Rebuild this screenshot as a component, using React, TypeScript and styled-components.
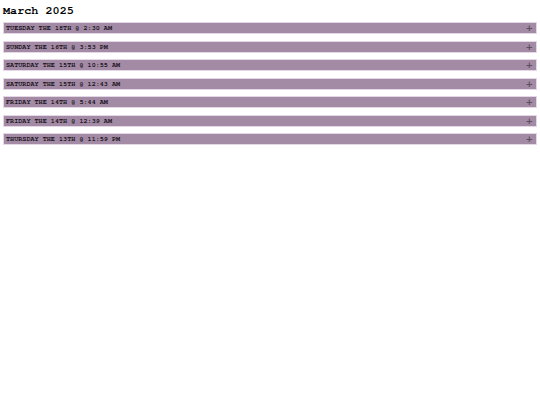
import React from "react";
import styled, { createGlobalStyle } from "styled-components";

const Global = createGlobalStyle`
  html, body { margin: 0; padding: 0; background: #ffffff; }
  body { font-family: "Nimbus Mono PS", "Nimbus Mono L", "FreeMono", Courier, "Courier New", "Liberation Mono", monospace; }
`;

const Page = styled.div`
  padding: 3px 3px 0 3px;
  display: flex;
  flex-direction: column;
`;

const Title = styled.h1`
  margin: 0 0 4px 0;
  font-size: 11.8px;
  line-height: 15px;
  font-weight: bold;
  color: #000;
`;

const List = styled.div`
  display: flex;
  flex-direction: column;
  gap: 6.5px;
`;

const Entry = styled.div`
  display: flex;
  align-items: center;
  justify-content: space-between;
  height: 10px;
  padding: 0 3px 0 2px;
  background: #a38aa5;
  border: 1px solid #e4d8e6;
  font-size: 6.8px;
  font-weight: bold;
  text-transform: uppercase;
  color: #1a141c;
`;

const Label = styled.span`
  white-space: nowrap;
  line-height: 10px;
`;

const Plus = styled.span`
  font-family: "DejaVu Sans", sans-serif;
  font-size: 9px;
  line-height: 10px;
  color: #5c505e;
  font-weight: bold;
`;

const entries = [
  "Tuesday the 18th @ 2:30 AM",
  "Sunday the 16th @ 3:53 PM",
  "Saturday the 15th @ 10:55 AM",
  "Saturday the 15th @ 12:43 AM",
  "Friday the 14th @ 5:44 AM",
  "Friday the 14th @ 12:39 AM",
  "Thursday the 13th @ 11:59 PM",
];

export default function App() {
  return (
    <>
      <Global />
      <Page>
        <Title>March 2025</Title>
        <List>
          {entries.map((e) => (
            <Entry key={e}>
              <Label>{e}</Label>
              <Plus>+</Plus>
            </Entry>
          ))}
        </List>
      </Page>
    </>
  );
}
